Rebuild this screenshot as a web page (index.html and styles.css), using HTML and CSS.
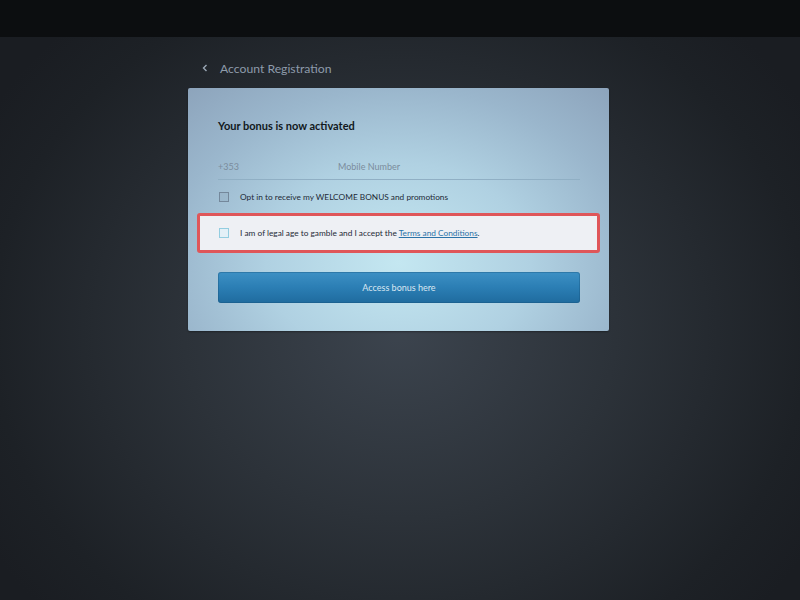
FILE: index.html
```html
<!DOCTYPE html>
<html lang="en">
<head>
<meta charset="utf-8">
<title>Account Registration</title>
<link rel="stylesheet" href="styles.css">
</head>
<body>
<div class="topbar"></div>
<main class="stage">
  <div class="panel">
    <div class="heading">
      <span class="back">
        <svg width="6" height="8" viewBox="0 0 6 8"><path d="M4.5 1 L1.5 4 L4.5 7" fill="none" stroke="#9aa7b5" stroke-width="1.4"/></svg>
      </span>
      <span class="heading-text">Account Registration</span>
    </div>
    <section class="card">
      <h1 class="title">Your bonus is now activated</h1>
      <div class="phone">
        <span class="prefix">+353</span>
        <span class="placeholder">Mobile Number</span>
      </div>
      <label class="check-row">
        <span class="box"></span>
        <span>Opt in to receive my WELCOME BONUS and promotions</span>
      </label>
      <div class="alert">
        <label class="check-row">
          <span class="box box-light"></span>
          <span>I am of legal age to gamble and I accept the <a class="link">Terms and Conditions</a>.</span>
        </label>
      </div>
      <button class="cta">Access bonus here</button>
    </section>
  </div>
</main>
</body>
</html>
```
FILE: styles.css
```css
* { box-sizing: border-box; }
html, body { margin: 0; padding: 0; }
body {
  width: 800px;
  height: 600px;
  overflow: hidden;
  font-family: Lato, "Open Sans", sans-serif;
  background: #1b1f24;
}
.topbar {
  height: 37px;
  background: #0c0e10;
}
.stage {
  height: 563px;
  background: radial-gradient(ellipse 480px 420px at 50% 52%, #3c444e 0%, #2c3239 45%, #1d2126 85%, #1a1d22 100%);
}
.panel {
  width: 421px;
  margin-left: 188px;
  padding-top: 22px;
}
.heading {
  display: flex;
  align-items: center;
  height: 18px;
  padding-left: 14px;
  margin-bottom: 11px;
}
.back { display: flex; width: 18px; }
.heading-text {
  color: #8e9bab;
  font-size: 12.2px;
}
.card {
  height: 243px;
  border-radius: 2px;
  padding: 31px 29px 0 30px;
  background: radial-gradient(ellipse 330px 250px at 50% 72%, #c4e7f1 0%, #b0d1e2 40%, #9ab6cc 70%, #8aa0b8 100%);
  box-shadow: 0 1px 2px rgba(0,0,0,0.35);
}
.title {
  margin: 0;
  font-size: 11px;
  font-weight: 700;
  color: #111820;
  line-height: 14px;
}
.phone {
  display: flex;
  align-items: center;
  margin-top: 20px;
  height: 27px;
  border-bottom: 1px solid #90afc4;
  font-size: 9px;
  color: #7b8c9c;
}
.prefix { width: 120px; }
.check-row {
  display: flex;
  align-items: center;
  font-size: 8.3px;
  color: #1e2a36;
  height: 14px;
}
.phone + .check-row { margin-top: 10px; }
.box {
  width: 10px;
  height: 10px;
  border: 1px solid #74889b;
  background: rgba(120,140,160,0.15);
  margin: 0 11px 0 1px;
  flex: none;
}
.box-light {
  border-color: #93cde0;
  background: rgba(220,240,248,0.6);
}
.alert {
  margin: 9px -20px 0 -21px;
  height: 40px;
  border: 3px solid #df5659;
  border-radius: 3px;
  background: #eef0f4;
  display: flex;
  align-items: center;
  padding-left: 18px;
}
.link {
  color: #2a73a8;
  text-decoration: underline;
}
.cta {
  display: block;
  width: 362px;
  height: 31px;
  margin-top: 19px;
  border: 0;
  border-radius: 3px;
  background: linear-gradient(180deg, #3d90c4 0%, #2b7eb4 50%, #1f6b9e 100%);
  box-shadow: inset 0 0 0 1px rgba(20,80,120,0.35);
  color: #dbe8f2;
  font-family: Lato, "Open Sans", sans-serif;
  font-size: 9px;
  padding: 0;
}
```
